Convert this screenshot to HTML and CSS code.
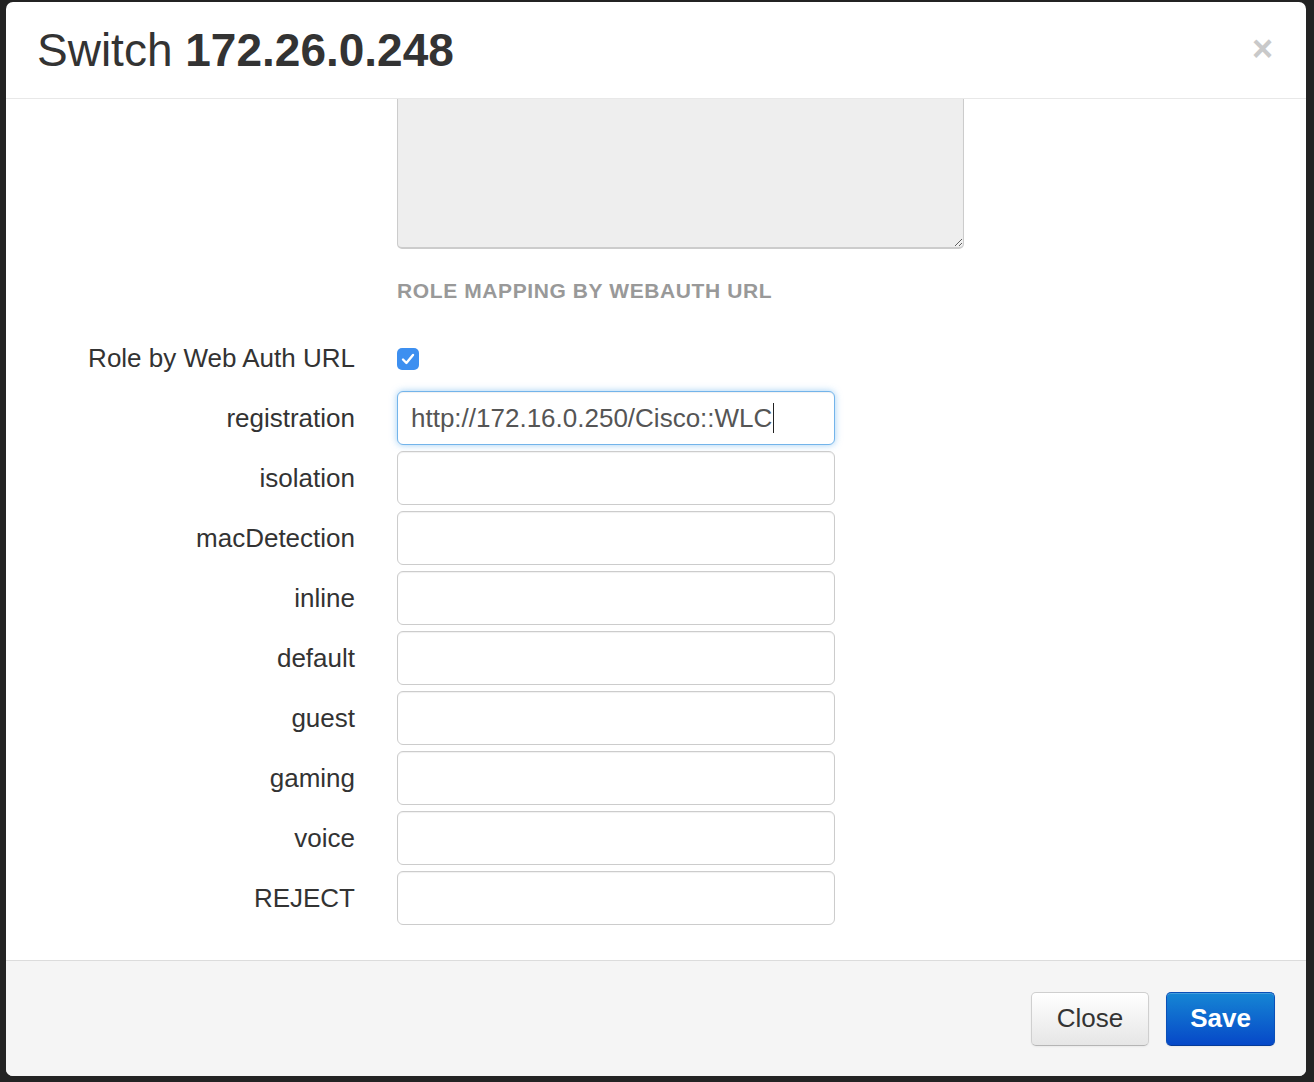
FILE: index.html
```html
<!DOCTYPE html>
<html>
<head>
<meta charset="utf-8">
<title>Switch 172.26.0.248</title>
<link rel="stylesheet" href="styles.css">
</head>
<body>
<div class="backdrop">
  <div class="modal">
    <div class="modal-header">
      <h3 class="title">Switch <strong>172.26.0.248</strong></h3>
      <span class="close">×</span>
    </div>
    <div class="modal-body">
      <div class="control-offset">
        <textarea class="textarea" readonly></textarea>
        <div class="section-title">ROLE MAPPING BY WEBAUTH URL</div>
      </div>
      <div class="form-grid">
        <label class="label">Role by Web Auth URL</label>
        <div class="control">
          <span class="checkbox"><svg width="22" height="22" viewBox="0 0 22 22"><path d="M6 11.5 L9.4 15 L16 7" fill="none" stroke="#fff" stroke-width="2.4" stroke-linecap="round" stroke-linejoin="round"/></svg></span>
        </div>

        <label class="label">registration</label>
        <div class="control"><div class="field focused">http://172.16.0.250/Cisco::WLC<span class="caret"></span></div></div>

        <label class="label">isolation</label>
        <div class="control"><input class="field" type="text"></div>

        <label class="label">macDetection</label>
        <div class="control"><input class="field" type="text"></div>

        <label class="label">inline</label>
        <div class="control"><input class="field" type="text"></div>

        <label class="label">default</label>
        <div class="control"><input class="field" type="text"></div>

        <label class="label">guest</label>
        <div class="control"><input class="field" type="text"></div>

        <label class="label">gaming</label>
        <div class="control"><input class="field" type="text"></div>

        <label class="label">voice</label>
        <div class="control"><input class="field" type="text"></div>

        <label class="label">REJECT</label>
        <div class="control"><input class="field" type="text"></div>
      </div>
    </div>
    <div class="modal-footer">
      <button class="btn btn-default">Close</button>
      <button class="btn btn-primary">Save</button>
    </div>
  </div>
</div>
</body>
</html>
```
FILE: styles.css
```css
html, body {
  margin: 0;
  padding: 0;
  height: 100%;
}
body {
  background: #232323;
  font-family: "Liberation Sans", Arial, sans-serif;
  color: #333;
  overflow: hidden;
}
.backdrop {
  padding: 2px 8px 0 6px;
}
.modal {
  width: 1300px;
  height: 1074px;
  background: #fff;
  border-radius: 7px;
  display: flex;
  flex-direction: column;
  overflow: hidden;
}
.modal-header {
  height: 96px;
  flex: 0 0 96px;
  border-bottom: 1px solid #e8e8e8;
  display: flex;
  align-items: center;
  padding: 0 31px;
}
.title {
  margin: 0;
  font-size: 46px;
  font-weight: normal;
  line-height: 50px;
  color: #333;
}
.title strong {
  font-weight: bold;
}
.close {
  margin-left: auto;
  margin-right: 2px;
  font-size: 36px;
  font-weight: bold;
  color: #c9c9c9;
  line-height: 36px;
  margin-top: -2px;
}
.modal-body {
  flex: 0 0 auto;
  overflow: hidden;
  padding: 0 0 35px 0;
}
.control-offset {
  margin-left: 391px;
}
.textarea {
  display: block;
  box-sizing: border-box;
  width: 567px;
  height: 200px;
  margin: -50px 0 0 0;
  background: #eee;
  border: 1px solid #ccc;
  border-bottom: 2px solid #ccc;
  border-radius: 5px;
  resize: both;
  box-shadow: inset 0 1px 1px rgba(0,0,0,0.04);
}
.section-title {
  margin-top: 30px;
  font-size: 21px;
  line-height: 24px;
  font-weight: bold;
  color: #999;
  letter-spacing: 0.6px;
}
.form-grid {
  margin-top: 28px;
  display: grid;
  grid-template-columns: 349px 438px;
  column-gap: 42px;
  row-gap: 6px;
  grid-auto-rows: 54px;
}
.label {
  display: flex;
  align-items: center;
  justify-content: flex-end;
  font-size: 26px;
  color: #333;
}
.control {
  display: flex;
  align-items: center;
}
.checkbox {
  width: 22px;
  height: 22px;
  border-radius: 5px;
  background: #3d8ff0;
  display: block;
  margin-top: 1px;
}
.checkbox svg {
  display: block;
}
.field {
  box-sizing: border-box;
  width: 438px;
  height: 54px;
  margin: 0;
  border: 1px solid #ccc;
  border-radius: 6px;
  background: #fff;
  padding: 0 13px;
  font-family: "Liberation Sans", Arial, sans-serif;
  font-size: 26px;
  color: #555;
  box-shadow: inset 0 1px 1px rgba(0,0,0,0.06);
  outline: none;
}
.field.focused {
  display: flex;
  align-items: center;
  border: 1px solid #73b4ea;
  box-shadow: inset 0 1px 1px rgba(0,0,0,0.06), 0 0 7px rgba(82,168,236,0.55);
}
.caret {
  display: inline-block;
  width: 1px;
  height: 30px;
  background: #222;
  margin-left: 1px;
}
.modal-footer {
  flex: 1 0 auto;
  background: #f5f5f5;
  border-top: 1px solid #dcdcdc;
  display: flex;
  align-items: center;
  justify-content: flex-end;
  gap: 17px;
  padding: 0 31px 0 0;
}
.btn {
  box-sizing: border-box;
  height: 54px;
  border-radius: 5px;
  font-family: "Liberation Sans", Arial, sans-serif;
  font-size: 26px;
  cursor: pointer;
  padding: 0;
}
.btn-default {
  width: 118px;
  color: #333;
  background: linear-gradient(#ffffff, #e6e6e6);
  border: 1px solid #cfcfcf;
  border-bottom-color: #b5b5b5;
  box-shadow: inset 0 1px 0 rgba(255,255,255,0.2), 0 1px 2px rgba(0,0,0,0.05);
}
.btn-primary {
  width: 109px;
  color: #fff;
  font-weight: bold;
  background: linear-gradient(#1686d4, #0648c8);
  border: 1px solid #0a50b8;
  border-bottom-color: #053b98;
  box-shadow: inset 0 1px 0 rgba(255,255,255,0.2), 0 1px 2px rgba(0,0,0,0.05);
}
```
